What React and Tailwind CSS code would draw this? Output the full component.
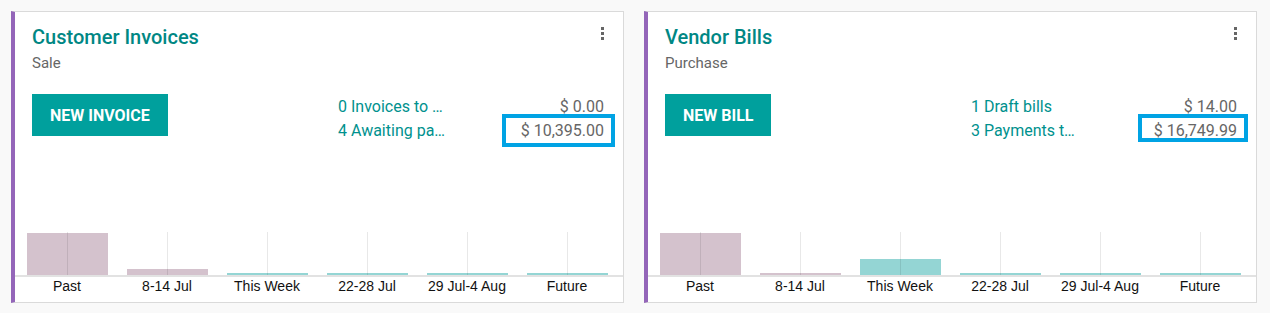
import React from 'react';

const LABELS = ['Past', '8-14 Jul', 'This Week', '22-28 Jul', '29 Jul-4 Aug', 'Future'];

const PAST = '#d4c2cd';
const FUTURE = '#94d5d4';

const cards = [
  {
    title: 'Customer Invoices',
    sub: 'Sale',
    button: 'NEW INVOICE',
    rows: [
      { label: '0 Invoices to validate', amount: '$ 0.00' },
      { label: '4 Awaiting payments', amount: '$ 10,395.00', boxed: { w: 113, top: -5, bottom: -4 } },
    ],
    bars: [42, 6, 0, 0, 0, 0],
  },
  {
    title: 'Vendor Bills',
    sub: 'Purchase',
    button: 'NEW BILL',
    rows: [
      { label: '1 Draft bills', amount: '$ 14.00' },
      { label: '3 Payments to do', amount: '$ 16,749.99', boxed: { w: 110, top: -5, bottom: 1 } },
    ],
    bars: [42, 0, 16, 0, 0, 0],
  },
];

function Kebab() {
  return (
    <div className="absolute right-[19px] top-[15px] flex flex-col gap-[2px]">
      <span className="w-[3px] h-[3px] bg-[#666]" />
      <span className="w-[3px] h-[3px] bg-[#666]" />
      <span className="w-[3px] h-[3px] bg-[#666]" />
    </div>
  );
}

function Chart({ bars }) {
  return (
    <div className="mt-auto">
      <div className="flex pl-[2px] pr-[6px] h-[43px] items-end">
        {bars.map((h, i) => (
          <div key={i} className="relative w-[100px] h-full flex items-end justify-center">
            <div
              className="w-[81px]"
              style={{ height: Math.max(h, 2), background: i < 2 ? PAST : FUTURE }}
            />
            <div className="absolute left-1/2 top-0 bottom-0 w-px bg-black/[0.09]" />
          </div>
        ))}
      </div>
      <div className="h-[2px] bg-[#e2e2e2]" />
      <div className="flex pl-[2px] pr-[6px] pb-[7px]">
        {LABELS.map(l => (
          <div key={l} className="w-[100px] text-center text-[14px] leading-[18px] text-[#111] font-['Liberation_Sans',Arial,sans-serif]">
            {l}
          </div>
        ))}
      </div>
    </div>
  );
}

function Card({ c }) {
  return (
    <div className="relative w-[613px] h-[292px] bg-white border border-[#dadada] border-l-4 border-l-[#9466b9] flex flex-col font-['Roboto',sans-serif]">
      <Kebab />
      <div className="pl-[17px] pr-[19px] pt-[13px]">
        <h2 className="text-[20px] leading-[24px] font-medium text-[#008784]">{c.title}</h2>
        <p className="mt-[4px] text-[15px] leading-[20px] text-[#666]">{c.sub}</p>
        <div className="flex mt-[21px]">
          <div className="w-[306px]">
            <button className="h-[42px] px-[18px] pt-[2px] bg-[#00a09d] text-white text-[16px] font-bold">
              {c.button}
            </button>
          </div>
          <div className="flex-1 pt-[1px] text-[16px] leading-[24px]">
            {c.rows.map(r => (
              <div key={r.label} className="relative flex">
                <span className="w-[110px] truncate text-[#00918e]">{r.label}</span>
                <span className="flex-1 text-right text-[#666]">{r.amount}</span>
                {r.boxed && (
                  <div
                    className="absolute right-[-11px] border-4 border-[#00a3e4]"
                    style={{ width: r.boxed.w, top: r.boxed.top, bottom: r.boxed.bottom }}
                  />
                )}
              </div>
            ))}
          </div>
        </div>
      </div>
      <Chart bars={c.bars} />
    </div>
  );
}

export default function App() {
  return (
    <div className="min-h-screen bg-[#f9f9f9] flex gap-5 pl-[11px] pt-[11px]">
      {cards.map(c => <Card key={c.title} c={c} />)}
    </div>
  );
}
